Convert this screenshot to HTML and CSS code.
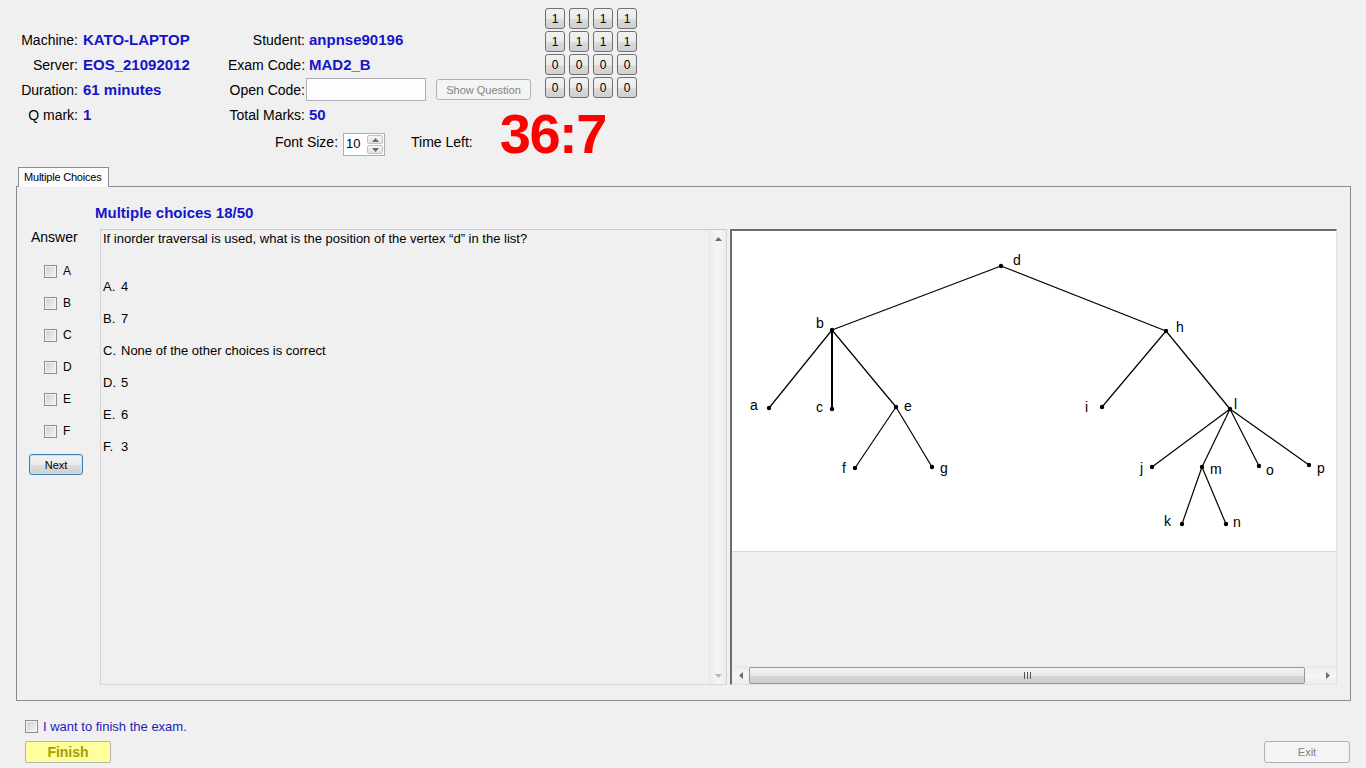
FILE: index.html
```html
<!DOCTYPE html>
<html>
<head>
<meta charset="utf-8">
<link rel="stylesheet" href="styles.css">
</head>
<body>
<div class="header">
  <div class="info">
    <div class="grid">
      <span class="lbl">Machine:</span><span class="val">KATO-LAPTOP</span><span class="lbl">Student:</span><span class="val v2">anpnse90196</span>
      <span class="lbl">Server:</span><span class="val">EOS_21092012</span><span class="lbl">Exam Code:</span><span class="val v2">MAD2_B</span>
      <span class="lbl">Duration:</span><span class="val">61 minutes</span><span class="lbl">Open Code:</span><span class="opencell"><span class="input"></span><span class="btn disabled show">Show Question</span></span>
      <span class="lbl">Q mark:</span><span class="val">1</span><span class="lbl">Total Marks:</span><span class="val v2">50</span>
    </div>
    <div class="ctrl">
      <span class="lab">Font Size:</span>
      <span class="spin"><span class="num">10</span><span class="arrows"><span class="ab"><svg width="7" height="4" viewBox="0 0 7 4"><path d="M0 4 L3.5 0 L7 4Z" fill="#6a6a6a"/></svg></span><span class="ab"><svg width="7" height="4" viewBox="0 0 7 4"><path d="M0 0 L3.5 4 L7 0Z" fill="#6a6a6a"/></svg></span></span></span>
      <span class="lab timelab">Time Left:</span>
      <span class="timer">36:7</span>
    </div>
  </div>
  <div class="btngrid">
    <span class="cell">1</span><span class="cell">1</span><span class="cell">1</span><span class="cell">1</span>
    <span class="cell">1</span><span class="cell">1</span><span class="cell">1</span><span class="cell">1</span>
    <span class="cell">0</span><span class="cell">0</span><span class="cell">0</span><span class="cell">0</span>
    <span class="cell">0</span><span class="cell">0</span><span class="cell">0</span><span class="cell">0</span>
  </div>
</div>

<div class="tabs"><span class="tab">Multiple Choices</span></div>
<div class="panel">
  <div class="title">Multiple choices 18/50</div>
  <div class="content">
    <div class="answer">
      <div class="anslab">Answer</div>
      <div class="choices">
        <label class="ch"><span class="cb"></span><span>A</span></label>
        <label class="ch"><span class="cb"></span><span>B</span></label>
        <label class="ch"><span class="cb"></span><span>C</span></label>
        <label class="ch"><span class="cb"></span><span>D</span></label>
        <label class="ch"><span class="cb"></span><span>E</span></label>
        <label class="ch"><span class="cb"></span><span>F</span></label>
      </div>
      <span class="btn next">Next</span>
    </div>
    <div class="qbox">
      <div class="qtext">
        <div class="q">If inorder traversal is used, what is the position of the vertex “d” in the list?</div>
        <div class="opt first"><span class="key">A.</span>4</div>
        <div class="opt"><span class="key">B.</span>7</div>
        <div class="opt"><span class="key">C.</span>None of the other choices is correct</div>
        <div class="opt"><span class="key">D.</span>5</div>
        <div class="opt"><span class="key">E.</span>6</div>
        <div class="opt"><span class="key">F.</span>3</div>
      </div>
      <div class="vscroll">
        <span class="sa"><svg width="7" height="4" viewBox="0 0 7 4"><path d="M0 4 L3.5 0 L7 4Z" fill="#6e6e6e"/></svg></span>
        <span class="sa"><svg width="7" height="4" viewBox="0 0 7 4"><path d="M0 0 L3.5 4 L7 0Z" fill="#b8b8b8"/></svg></span>
      </div>
    </div>
    <div class="imgbox">
      <div class="pic">
        <svg width="604" height="320" viewBox="-1 -1 604 320" class="tree">
          <g stroke="#000" stroke-width="1.2" fill="none">
            <line x1="268" y1="34" x2="99" y2="98"/>
            <line x1="268" y1="34" x2="433" y2="99"/>
            <line x1="99" y1="98" x2="36" y2="176"/>
            <line x1="99" y1="98" x2="99" y2="177" stroke-width="2"/>
            <line x1="99" y1="98" x2="163" y2="175"/>
            <line x1="163" y1="175" x2="122" y2="236"/>
            <line x1="163" y1="175" x2="199" y2="235"/>
            <line x1="433" y1="99" x2="369" y2="175"/>
            <line x1="433" y1="99" x2="497" y2="177"/>
            <line x1="497" y1="177" x2="419" y2="235"/>
            <line x1="497" y1="177" x2="469" y2="235"/>
            <line x1="497" y1="177" x2="526" y2="234"/>
            <line x1="497" y1="177" x2="576" y2="233"/>
            <line x1="469" y1="235" x2="449" y2="292"/>
            <line x1="469" y1="235" x2="493" y2="292"/>
          </g>
          <g fill="#000">
            <circle cx="268" cy="34" r="2.2"/><circle cx="99" cy="98" r="2.2"/><circle cx="433" cy="99" r="2.2"/>
            <circle cx="36" cy="176" r="2.2"/><circle cx="99" cy="177" r="2.2"/><circle cx="163" cy="175" r="2.2"/>
            <circle cx="122" cy="236" r="2.2"/><circle cx="199" cy="235" r="2.2"/><circle cx="369" cy="175" r="2.2"/>
            <circle cx="497" cy="177" r="2.2"/><circle cx="419" cy="235" r="2.2"/><circle cx="469" cy="235" r="2.2"/>
            <circle cx="526" cy="234" r="2.2"/><circle cx="576" cy="233" r="2.2"/><circle cx="449" cy="292" r="2.2"/>
            <circle cx="493" cy="292" r="2.2"/>
          </g>
          <g class="lbls">
            <text x="280" y="33">d</text>
            <text x="83" y="96">b</text>
            <text x="443" y="100">h</text>
            <text x="17" y="178">a</text>
            <text x="83" y="180">c</text>
            <text x="171" y="179">e</text>
            <text x="352" y="180">i</text>
            <text x="501" y="177">l</text>
            <text x="109" y="241">f</text>
            <text x="207" y="241">g</text>
            <text x="407" y="241">j</text>
            <text x="477" y="242">m</text>
            <text x="533" y="243">o</text>
            <text x="584" y="241">p</text>
            <text x="431" y="294">k</text>
            <text x="500" y="295">n</text>
          </g>
        </svg>
      </div>
      <div class="grey"></div>
      <div class="hscroll">
        <span class="harrow"><svg width="4" height="7" viewBox="0 0 4 7"><path d="M4 0 L0 3.5 L4 7Z" fill="#6e6e6e"/></svg></span>
        <span class="track"><span class="thumb"><span class="grip"></span><span class="grip"></span><span class="grip"></span></span></span>
        <span class="harrow"><svg width="4" height="7" viewBox="0 0 4 7"><path d="M0 0 L4 3.5 L0 7Z" fill="#6e6e6e"/></svg></span>
      </div>
    </div>
  </div>
</div>

<div class="bottom">
  <div class="fincol">
    <label class="finrow"><span class="cb"></span><span class="fintext">I want to finish the exam.</span></label>
    <span class="btn finish">Finish</span>
  </div>
  <span class="btn disabled exit">Exit</span>
</div>
</body>
</html>
```

FILE: styles.css
```css
html, body {
  margin: 0;
  padding: 0;
}
body {
  background: #f0f0f0;
  font-family: "Liberation Sans", Arial, sans-serif;
  color: #000;
  width: 1366px;
  height: 768px;
  overflow: hidden;
}

/* header */
.header {
  display: flex;
  height: 167px;
}
.info {
  flex: 0 0 545px;
  min-width: 0;
  width: 545px;
  padding-top: 27px;
  box-sizing: border-box;
}
.grid {
  display: grid;
  grid-template-columns: 78px 150px 77px auto;
  grid-auto-rows: 25px;
  align-items: center;
  font-size: 14px;
}
.lbl {
  text-align: right;
  white-space: nowrap;
}
.val {
  font-weight: bold;
  font-size: 15px;
  color: #1515c8;
  padding-left: 5px;
  white-space: nowrap;
}
.val.v2 {
  padding-left: 4px;
}
.opencell {
  display: flex;
  align-items: center;
}
.input {
  width: 120px;
  height: 23px;
  box-sizing: border-box;
  border: 1px solid #abadb3;
  background: #fdfdfd;
  margin-left: 1px;
}
.btn {
  display: flex;
  align-items: center;
  justify-content: center;
  box-sizing: border-box;
  border: 1px solid #707070;
  border-radius: 3px;
  background: linear-gradient(#f2f2f2 0%, #ebebeb 50%, #dddddd 51%, #cfcfcf 100%);
  font-size: 11px;
  white-space: nowrap;
}
.btn.disabled {
  border-color: #adb2b5;
  background: #f4f4f4;
  color: #838383;
}
.show {
  margin-left: 10px;
  width: 95px;
  height: 21px;
}
.ctrl {
  display: flex;
  align-items: flex-start;
  padding-left: 275px;
  margin-top: 6px;
  font-size: 14px;
  width: 700px;
}
.lab {
  line-height: 19px;
  white-space: nowrap;
}
.spin {
  margin-left: 5px;
  width: 42px;
  height: 23px;
  flex: none;
  box-sizing: border-box;
  border: 1px solid #abadb3;
  background: #fff;
  display: flex;
}
.spin .num {
  flex: 1;
  font-size: 13px;
  padding-left: 2px;
  line-height: 20px;
}
.spin .arrows {
  width: 16px;
  display: flex;
  flex-direction: column;
  padding: 1px 1px 1px 0;
  gap: 1px;
}
.ab {
  flex: 1;
  display: flex;
  align-items: center;
  justify-content: center;
  border: 1px solid #c2c2c2;
  border-radius: 2px;
  background: linear-gradient(#f6f6f6, #e2e2e2);
}
.timelab {
  margin-left: 26px;
}
.timer {
  margin-left: 27px;
  margin-top: -27px;
  font-size: 56px;
  font-weight: bold;
  color: #ff0000;
  line-height: 56px;
  letter-spacing: -1.5px;
  white-space: nowrap;
}
.btngrid {
  display: grid;
  grid-template-columns: repeat(4, 20px);
  grid-auto-rows: 21px;
  column-gap: 4px;
  row-gap: 2px;
  padding-top: 8px;
  align-self: flex-start;
}
.cell {
  display: flex;
  align-items: center;
  justify-content: center;
  box-sizing: border-box;
  border: 1px solid #707070;
  border-radius: 3px;
  background: linear-gradient(#f2f2f2 0%, #ebebeb 50%, #dddddd 51%, #cfcfcf 100%);
  font-size: 12px;
}

/* tabs */
.tabs {
  display: flex;
  padding-left: 18px;
}
.tab {
  position: relative;
  width: 91px;
  height: 20px;
  box-sizing: border-box;
  border: 1px solid #898c95;
  border-bottom: none;
  background: #fcfcfc;
  font-size: 11px;
  letter-spacing: -0.2px;
  line-height: 18px;
  padding-left: 5px;
  margin-bottom: -1px;
  white-space: nowrap;
}
.panel {
  margin-left: 16px;
  width: 1335px;
  height: 515px;
  box-sizing: border-box;
  border: 1px solid #898c95;
  padding-top: 17px;
}
.title {
  padding-left: 78px;
  font-size: 15px;
  font-weight: bold;
  color: #1515c8;
  line-height: 18px;
}
.content {
  display: flex;
  margin-top: 7px;
  height: 456px;
}
.answer {
  width: 83px;
  flex: none;
}
.anslab {
  margin-left: 14px;
  font-size: 14px;
  line-height: 16px;
}
.choices {
  margin-top: 10px;
}
.ch {
  display: flex;
  align-items: center;
  height: 32px;
  padding-left: 27px;
  gap: 6px;
  font-size: 12px;
}
.cb {
  width: 13px;
  height: 13px;
  flex: none;
  box-sizing: border-box;
  border: 1px solid #8e8f8f;
  background: linear-gradient(135deg, #cbcfd5, #f6f6f6);
  box-shadow: inset 0 0 0 1px #f4f4f4;
}
.next {
  margin-top: 7px;
  margin-left: 12px;
  width: 54px;
  height: 21px;
  border-color: #3c7fb1;
  box-shadow: inset 0 0 0 1px #c4e5f6;
}
.qbox {
  width: 627px;
  flex: none;
  box-sizing: border-box;
  border: 1px solid #d5d5d5;
  border-top-color: #c8c8c8;
  display: flex;
}
.qtext {
  flex: 1;
  padding: 1px 0 0 2px;
  font-size: 13px;
  line-height: 16px;
}
.opt {
  margin-top: 16px;
  display: flex;
}
.opt.first {
  margin-top: 32px;
}
.key {
  width: 18px;
  flex: none;
}
.vscroll {
  width: 16px;
  flex: none;
  border-left: 1px solid #e8e8e8;
  background: linear-gradient(90deg, #ececec, #f6f6f6 50%, #ececec);
  display: flex;
  flex-direction: column;
  justify-content: space-between;
}
.sa {
  height: 17px;
  display: flex;
  align-items: center;
  justify-content: center;
}
.imgbox {
  margin-left: 3px;
  width: 607px;
  flex: none;
  box-sizing: border-box;
  border-left: 2px solid #6d6d6d;
  border-top: 2px solid #6d6d6d;
  border-right: 1px solid #e3e3e3;
  border-bottom: 1px solid #e3e3e3;
  display: flex;
  flex-direction: column;
}
.pic {
  height: 320px;
  background: #fff;
  border-bottom: 1px solid #d9d9d9;
  flex: none;
}
.tree {
  display: block;
}
.lbls text {
  font-family: "Liberation Sans", Arial, sans-serif;
  font-size: 14px;
  fill: #000;
}
.grey {
  flex: 1;
}
.hscroll {
  height: 17px;
  flex: none;
  display: flex;
  background: linear-gradient(#ececec, #f6f6f6 50%, #ececec);
  border-top: 1px solid #e8e8e8;
}
.harrow {
  width: 17px;
  display: flex;
  align-items: center;
  justify-content: center;
}
.track {
  flex: 1;
  display: flex;
  align-items: stretch;
}
.thumb {
  width: 556px;
  box-sizing: border-box;
  border: 1px solid #979797;
  border-radius: 2px;
  background: linear-gradient(#f3f3f3, #e8e8e8 50%, #d6d6d6 51%, #cdcdcd);
  display: flex;
  align-items: center;
  justify-content: center;
  gap: 2px;
}
.grip {
  width: 1px;
  height: 7px;
  background: #555;
}

/* bottom */
.bottom {
  display: flex;
  justify-content: space-between;
  align-items: flex-end;
  padding: 19px 16px 0 25px;
}
.fincol {
  display: flex;
  flex-direction: column;
}
.finrow {
  display: flex;
  align-items: center;
  height: 13px;
  gap: 5px;
}
.fintext {
  font-size: 13px;
  color: #1c1cb8;
  white-space: nowrap;
}
.finish {
  margin-top: 8px;
  width: 86px;
  height: 22px;
  border: 1px solid #b4b4b4;
  border-radius: 2px;
  background: #ffff9c;
  color: #a0a000;
  font-size: 14px;
  font-weight: bold;
}
.exit {
  width: 86px;
  height: 22px;
  font-size: 11px;
  color: #a0a0a0;
}
```
